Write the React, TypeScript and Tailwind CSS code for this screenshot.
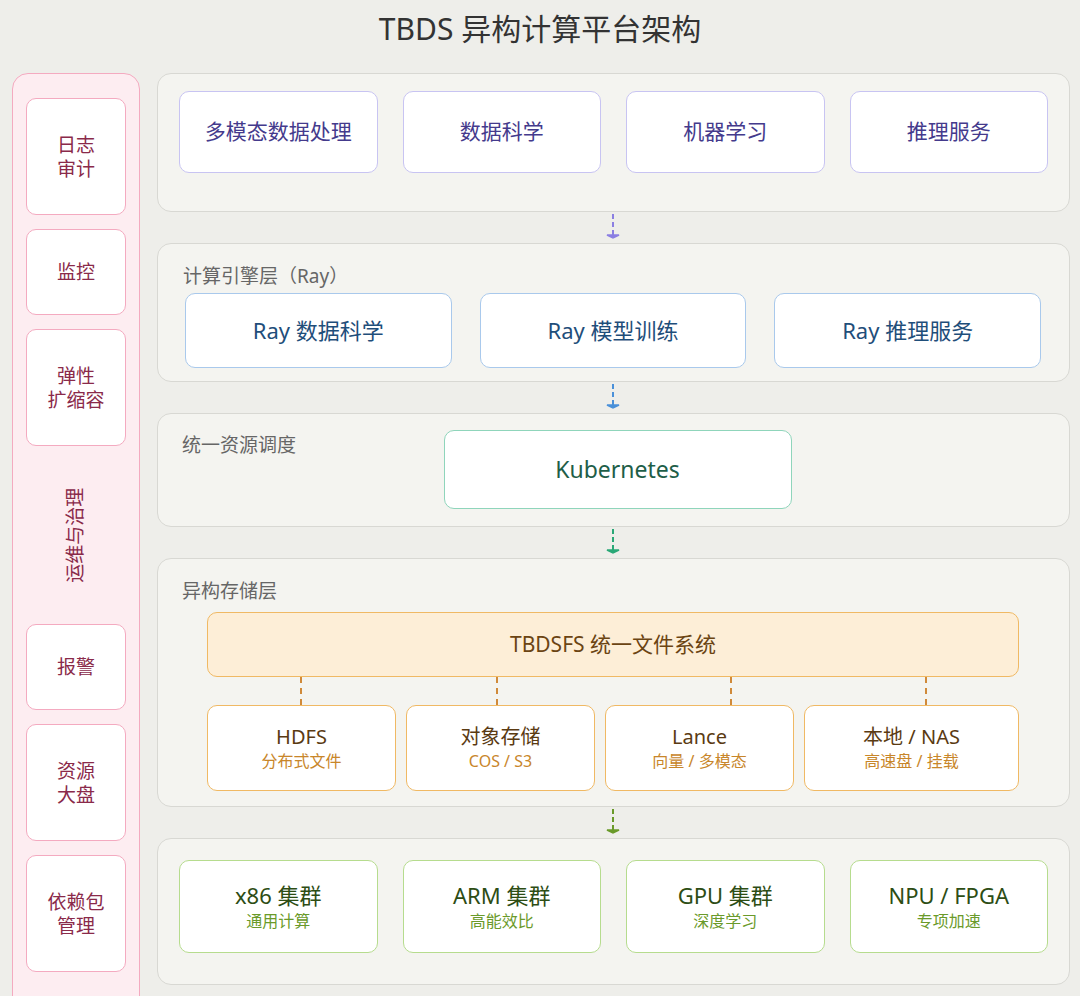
import React from "react";

const F = { fontFamily: '"Noto Sans", "Noto Sans CJK SC", sans-serif' };

function Arrow({ color }: { color: string }) {
  return (
    <div className="h-[31px] flex justify-center">
      <svg width="16" height="31" viewBox="0 0 16 31">
        <line x1="7" y1="2" x2="7" y2="23" stroke={color} strokeWidth="2" strokeDasharray="5 3" />
        <path d="M1 23 L13 23 L7 26 Z" fill={color} stroke={color} strokeWidth="1.5" />
      </svg>
    </div>
  );
}

function SideItem({ lines, h }: { lines: string[]; h: string }) {
  return (
    <div className={`${h} bg-white border border-[#f4aac0] rounded-[10px] flex flex-col items-center justify-center text-[19px] leading-[24px] text-[#8a2a4a]`}>
      {lines.map((l) => (
        <div key={l}>{l}</div>
      ))}
    </div>
  );
}

export default function App() {
  return (
    <div style={F} className="w-[1080px] h-[996px] overflow-hidden bg-[#eeeeea] relative">
      <div className="h-[73px] flex justify-center pt-[6px] text-[30px] text-[#333]">TBDS 异构计算平台架构</div>
      <div className="flex pl-[12px] gap-[17px]">
        <div className="w-[128px] h-[940px] bg-[#fdedf1] border border-[#f4aac0] rounded-[16px] px-[13px] pt-[24px] flex flex-col gap-[14px]">
          <SideItem lines={["日志", "审计"]} h="h-[117px]" />
          <SideItem lines={["监控"]} h="h-[86px]" />
          <SideItem lines={["弹性", "扩缩容"]} h="h-[117px]" />
          <div className="h-[150px] flex items-center justify-center">
            <div className="-rotate-90 whitespace-nowrap text-[19px] text-[#8a2a4a]">运维与治理</div>
          </div>
          <SideItem lines={["报警"]} h="h-[86px]" />
          <SideItem lines={["资源", "大盘"]} h="h-[117px]" />
          <SideItem lines={["依赖包", "管理"]} h="h-[117px]" />
        </div>
        <div className="w-[913px] flex flex-col">
          <div className="h-[139px] bg-[#f4f4f0] border border-[#d8d8d3] rounded-[14px] pl-[21px] pr-[21px] pt-[17px] flex gap-[25px]">
            {["多模态数据处理", "数据科学", "机器学习", "推理服务"].map((t) => (
              <div key={t} className="w-[199px] h-[82px] bg-white border border-[#c8c4f2] rounded-[10px] flex items-center justify-center text-[21px] text-[#443a8c]">{t}</div>
            ))}
          </div>
          <Arrow color="#8b7fe2" />
          <div className="h-[139px] bg-[#f4f4f0] border border-[#d8d8d3] rounded-[14px] pl-[27px] pr-[28px] pt-[18px]">
            <div className="text-[19px] leading-[28px] text-[#666] -ml-[2px] mb-[3px]">计算引擎层（Ray）</div>
            <div className="flex gap-[28px]">
              {["Ray 数据科学", "Ray 模型训练", "Ray 推理服务"].map((t) => (
                <div key={t} className="flex-1 h-[75px] bg-white border border-[#a9c9ec] rounded-[10px] flex items-center justify-center text-[22px] text-[#1f4e7a]">{t}</div>
              ))}
            </div>
          </div>
          <Arrow color="#4a90d9" />
          <div className="h-[114px] bg-[#f4f4f0] border border-[#d8d8d3] rounded-[14px] relative">
            <div className="absolute left-[24px] top-[17px] text-[19px] leading-[28px] text-[#666]">统一资源调度</div>
            <div className="flex justify-center pt-[16px] pr-[2px]">
              <div className="ml-[10px] w-[348px] h-[79px] bg-white border border-[#8fd5bb] rounded-[10px] flex items-center justify-center text-[23px] text-[#1e5e48]">Kubernetes</div>
            </div>
          </div>
          <Arrow color="#2aa877" />
          <div className="h-[249px] bg-[#f4f4f0] border border-[#d8d8d3] rounded-[14px] pl-[49px] pr-[50px] pt-[18px]">
            <div className="text-[19px] leading-[28px] text-[#666] -ml-[25px] mb-[7px]">异构存储层</div>
            <div className="h-[65px] bg-[#fdeed7] border border-[#f0b964] rounded-[10px] flex items-center justify-center text-[21px] text-[#6b4413]">TBDSFS 统一文件系统</div>
            <div className="h-[28px] relative">
              {[93, 289, 523, 718].map((x) => (
                <div key={x} className="absolute top-0 w-0 h-[28px] border-l-2 border-dashed border-[#d08a3a]" style={{ left: x }} />
              ))}
            </div>
            <div className="flex gap-[10px]">
              {[
                ["HDFS", "分布式文件", "w-[189px]"],
                ["对象存储", "COS / S3", "w-[189px]"],
                ["Lance", "向量 / 多模态", "w-[189px]"],
                ["本地 / NAS", "高速盘 / 挂载", "flex-1"],
              ].map(([a, b, w]) => (
                <div key={a} className={`${w} h-[86px] bg-white border border-[#f0b964] rounded-[10px] flex flex-col items-center justify-center`}>
                  <div className="text-[20px] leading-[26px] text-[#5a3a12]">{a}</div>
                  <div className="text-[16px] leading-[22px] text-[#c8862a]">{b}</div>
                </div>
              ))}
            </div>
          </div>
          <Arrow color="#6a9a2a" />
          <div className="h-[147px] bg-[#f4f4f0] border border-[#d8d8d3] rounded-[14px] pl-[21px] pr-[21px] pt-[21px] flex gap-[25px]">
            {[
              ["x86 集群", "通用计算"],
              ["ARM 集群", "高能效比"],
              ["GPU 集群", "深度学习"],
              ["NPU / FPGA", "专项加速"],
            ].map(([a, b]) => (
              <div key={a} className="w-[199px] h-[93px] bg-white border border-[#b6dc8e] rounded-[10px] flex flex-col items-center justify-center">
                <div className="text-[22px] leading-[28px] text-[#2d4d14]">{a}</div>
                <div className="text-[16px] leading-[24px] text-[#6a9a2a]">{b}</div>
              </div>
            ))}
          </div>
        </div>
      </div>
    </div>
  );
}
